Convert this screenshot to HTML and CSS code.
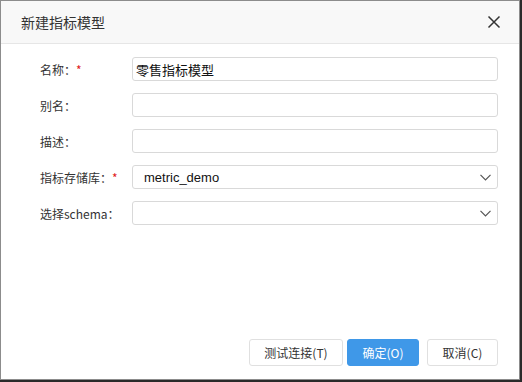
FILE: index.html
```html
<!DOCTYPE html>
<html lang="zh-CN">
<head>
    <meta charset="UTF-8">
    <title>新建指标模型</title>
    <link rel="stylesheet" href="styles.css">
</head>
<body>
    <div class="dialog">
        <div class="header">
            <span class="title">新建指标模型</span>
            <svg class="close" width="14" height="14" viewBox="0 0 14 14">
                <path d="M1.5 1.5 L12.5 12.5 M12.5 1.5 L1.5 12.5" stroke="#333" stroke-width="1.5" fill="none"/>
            </svg>
        </div>

        <div class="form">
            <div class="row">
                <label class="label">名称：<span class="req">*</span></label>
                <div class="input">零售指标模型</div>
            </div>
            <div class="row">
                <label class="label">别名：</label>
                <div class="input"></div>
            </div>
            <div class="row">
                <label class="label">描述：</label>
                <div class="input"></div>
            </div>
            <div class="row">
                <label class="label">指标存储库：<span class="req">*</span></label>
                <div class="input select">
                    <span>metric_demo</span>
                    <svg width="11" height="7" viewBox="0 0 11 7"><path d="M0.5 0.8 L5.5 5.8 L10.5 0.8" stroke="#555" stroke-width="1.2" fill="none"/></svg>
                </div>
            </div>
            <div class="row">
                <label class="label">选择schema：</label>
                <div class="input select">
                    <span></span>
                    <svg width="11" height="7" viewBox="0 0 11 7"><path d="M0.5 0.8 L5.5 5.8 L10.5 0.8" stroke="#555" stroke-width="1.2" fill="none"/></svg>
                </div>
            </div>
        </div>

        <div class="footer">
            <button class="btn btn-test">测试连接(T)</button>
            <button class="btn btn-primary">确定(O)</button>
            <button class="btn btn-cancel">取消(C)</button>
        </div>
    </div>
</body>
</html>
```

FILE: styles.css
```css
* {
    margin: 0;
    padding: 0;
    box-sizing: border-box;
}

body {
    font-family: "Noto Sans CJK SC", "Noto Sans", sans-serif;
    background: #2a2a2a;
    width: 522px;
    height: 382px;
    overflow: hidden;
}

.dialog {
    width: 520px;
    height: 380px;
    background: white;
    border: 1px solid #8c8c8c;
    display: flex;
    flex-direction: column;
}

.header {
    height: 43px;
    background: #f8f8f8;
    border-bottom: 1px solid #e6e6e6;
    display: flex;
    align-items: center;
    justify-content: space-between;
    padding: 0 18px 0 20px;
    flex-shrink: 0;
}

.title {
    font-size: 14px;
    color: #333;
}

.form {
    padding: 13px 21px 0 39px;
    display: flex;
    flex-direction: column;
    gap: 12px;
    flex: 1;
}

.row {
    display: flex;
    align-items: center;
    height: 24px;
}

.label {
    width: 92px;
    font-size: 12px;
    color: #333;
    flex-shrink: 0;
}

.req {
    color: #e02020;
}

.input {
    flex: 1;
    height: 24px;
    border: 1px solid #d9d9d9;
    border-radius: 3px;
    font-size: 13px;
    color: #111;
    padding: 0 3px;
    display: flex;
    align-items: center;
}

.select {
    justify-content: space-between;
    padding: 0 6px 0 11px;
    font-family: "Liberation Sans", "Noto Sans CJK SC", sans-serif;
}

.footer {
    display: flex;
    justify-content: flex-end;
    gap: 8px;
    padding: 0 21px 13px 0;
}

.btn {
    height: 27px;
    border: 1px solid #e0e0e0;
    border-radius: 3px;
    background: white;
    font-family: "Noto Sans CJK SC", "Noto Sans", sans-serif;
    font-size: 12px;
    color: #333;
}

.btn-test {
    width: 94px;
}

.btn-primary {
    width: 72px;
    margin-left: -4px;
    background: #3f98e8;
    border-color: #3f98e8;
    color: white;
}

.btn-cancel {
    width: 71px;
}
```
